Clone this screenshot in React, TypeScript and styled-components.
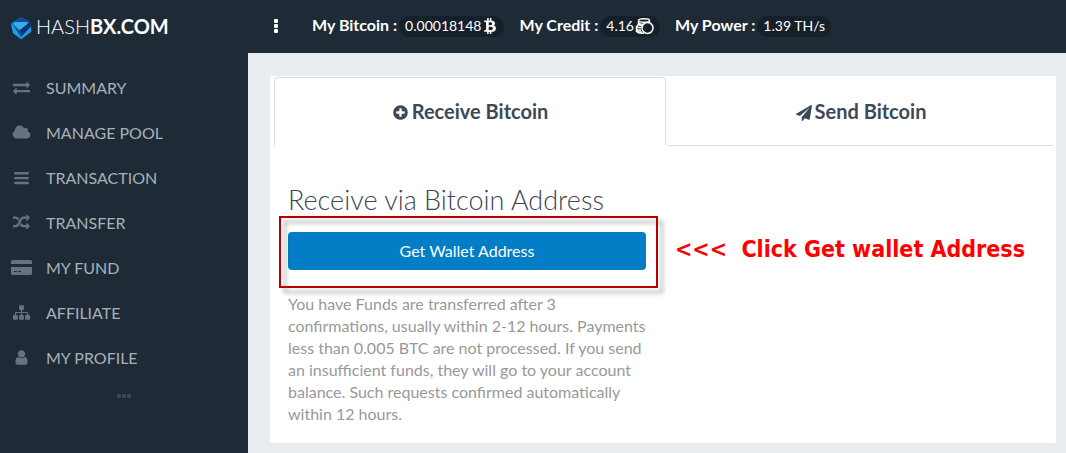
import React from "react";
import styled, { createGlobalStyle, css } from "styled-components";
import { FaBtc } from "react-icons/fa";

const GlobalStyle = createGlobalStyle`
  *, *::before, *::after { box-sizing: border-box; }
  body {
    margin: 0;
    background: #e9edf2;
    color: #3d4751;
    font-family: Lato, "Liberation Sans", sans-serif;
    font-size: 16px;
    line-height: 22px;
  }
  h1, h2, p, ul { margin: 0; padding: 0; }
`;

const Shell = styled.div`
  display: grid;
  grid-template-columns: 248px minmax(0, 1fr);
  min-height: 100vh;
`;

const Sidebar = styled.aside`
  display: flex;
  flex-direction: column;
  background: #1e2b37;
`;

const Brand = styled.a`
  display: flex;
  align-items: center;
  gap: 4px;
  height: 53px;
  padding: 0 10px 2px;
  color: #fff;
  font-size: 20px;
  line-height: 28px;
  font-weight: 300;
  text-decoration: none;

  svg { margin-top: 4px; }
  b { font-weight: 700; }
`;

const Menu = styled.ul`
  list-style: none;
  padding: 12px 0 0;
`;

const MenuLink = styled.a`
  display: flex;
  align-items: center;
  gap: 13px;
  height: 45px;
  padding: 0 10px;
  color: #a8b1ba;
  text-decoration: none;
`;

const MenuIcon = styled.span`
  display: flex;
  justify-content: center;
  width: 23px;
  color: #67727e;
`;

const SidebarDots = styled.div`
  display: flex;
  justify-content: center;
  gap: 1px;
  padding-top: 14px;

  i {
    width: 4px;
    height: 4px;
    border-radius: 1px;
    background: #3a4754;
  }
`;

const Main = styled.main`
  display: flex;
  flex-direction: column;
`;

const TopBar = styled.header`
  display: flex;
  align-items: center;
  height: 53px;
  padding: 0 0 2px 26px;
  background: #1e2b37;
  color: #fff;
`;

const MoreButton = styled.button`
  display: flex;
  flex-direction: column;
  gap: 1px;
  margin-right: 34px;
  padding: 0;
  border: 0;
  background: none;
  cursor: pointer;

  i {
    width: 4px;
    height: 4px;
    border-radius: 1px;
    background: #fff;
  }
`;

const Stats = styled.div`
  display: flex;
  align-items: center;
  gap: 15px;
`;

const Stat = styled.div`
  display: flex;
  align-items: baseline;
  gap: 2px;
  font-weight: 700;
  white-space: nowrap;
`;

const Badge = styled.span`
  display: flex;
  align-items: center;
  gap: 1px;
  height: 21px;
  padding: 0 6px;
  border-radius: 10px;
  background: #15202a;
  font-size: 14px;
  font-weight: 400;
`;

const Page = styled.div`
  padding: 23px 10px 10px 22px;
`;

const Panel = styled.section`
  padding-bottom: 18px;
  border-radius: 2px;
  background: #fff;
`;

const Tabs = styled.div`
  display: flex;
  gap: 2px;
  padding: 1px 2px 0 4px;
`;

const Tab = styled.button<{ $active?: boolean }>`
  display: flex;
  flex: 1;
  align-items: center;
  justify-content: center;
  gap: 3px;
  height: 69px;
  padding: 0 0 2px;
  border: 1px solid transparent;
  border-bottom-color: #ddd;
  background: #fff;
  color: #3d4957;
  font: 700 20px/24px Lato, "Liberation Sans", sans-serif;
  cursor: pointer;

  svg { margin-top: 4px; }

  ${({ $active }) =>
    $active &&
    css`
      flex: 0 0 calc(50% + 2px);
      border-color: #ddd #ddd transparent;
      border-radius: 4px 4px 0 0;
    `}
`;

const Columns = styled.div`
  display: grid;
  grid-template-columns: repeat(2, minmax(0, 1fr));
  gap: 29px;
  padding: 38px 23px 0 18px;
`;

const Title = styled.h1`
  margin-bottom: 16px;
  font-size: 27px;
  line-height: 32px;
  font-weight: 300;
  white-space: nowrap;
`;

const Highlight = styled.div`
  position: relative;
  margin-bottom: 23px;

  &::after {
    content: "";
    position: absolute;
    inset: -16px -12px -18px -9px;
    border: 2px solid #b80000;
    filter: drop-shadow(5px 5px 2px rgba(0, 0, 0, 0.35));
    pointer-events: none;
  }
`;

const PrimaryButton = styled.button`
  display: block;
  width: 100%;
  height: 38px;
  border: 0;
  border-radius: 4px;
  background: #037dc5;
  color: #fff;
  font: 400 16px/22px Lato, "Liberation Sans", sans-serif;
  cursor: pointer;
`;

const Hint = styled.p`
  color: #999;
`;

const Callout = styled.p`
  padding-top: 52px;
  color: #f00;
  font: 700 23px/26px "DejaVu Sans Condensed", "DejaVu Sans", sans-serif;
  white-space: pre;
`;

const paths = {
  exchange:
    "M1792 1184v192q0 13-9.5 22.5t-22.5 9.5h-1376v192q0 13-9.5 22.5t-22.5 9.5q-12 0-24-10l-319-320q-9-9-9-22 0-14 9-23l320-320q9-9 23-9 13 0 22.5 9.5t9.5 22.5v192h1376q13 0 22.5 9.5t9.5 22.5zm0-544q0 14-9 23l-320 320q-9 9-23 9-13 0-22.5-9.5t-9.5-22.5v-192h-1376q-13 0-22.5-9.5t-9.5-22.5v-192q0-13 9.5-22.5t22.5-9.5h1376v-192q0-14 9-23t23-9q12 0 24 10l319 319q9 9 9 23z",
  cloud:
    "M1984 1152q0 159-112.5 271.5t-271.5 112.5h-1088q-185 0-316.5-131.5t-131.5-316.5q0-132 71-241.5t187-163.5q-2-28-2-43 0-212 150-362t362-150q158 0 286.5 88t187.5 230q70-62 166-62 106 0 181 75t75 181q0 75-41 138 129 30 213 134.5t84 239.5z",
  bars:
    "M128 384q0-64 64-64h1408q64 0 64 64v128q0 64-64 64H192q-64 0-64-64zM128 896q0-64 64-64h1408q64 0 64 64v128q0 64-64 64H192q-64 0-64-64zM128 1408q0-64 64-64h1408q64 0 64 64v128q0 64-64 64H192q-64 0-64-64z",
  random:
    "M666 481q-60 92-137 273-22-45-37-72.5t-40.5-63.5-51-56.5-63-35-81.5-14.5h-224q-14 0-23-9t-9-23v-192q0-14 9-23t23-9h224q250 0 410 225zm1126 799q0 14-9 23l-320 320q-9 9-23 9-13 0-22.5-9.5t-9.5-22.5v-192q-32 0-85 .5t-81 1-73-1-71-5-64-10.5-63-18.5-58-28.5-59-40-55-53.5-56-69.5q59-93 136-273 22 45 37 72.5t40.5 63.5 51 56.5 63 35 81.5 14.5h256v-192q0-14 9-23t23-9q12 0 24 10l319 319q9 9 9 23zm0-896q0 14-9 23l-320 320q-9 9-23 9-13 0-22.5-9.5t-9.5-22.5v-192h-256q-48 0-87 15t-69 45-51 61.5-45 77.5q-32 62-78 171-29 66-49.5 111t-54 105-64 100-74 83-90 68.5-106.5 42-128 16.5h-224q-14 0-23-9t-9-23v-192q0-14 9-23t23-9h224q48 0 87-15t69-45 51-61.5 45-77.5q32-62 78-171 29-66 49.5-111t54-105 64-100 74-83 90-68.5 106.5-42 128-16.5h256v-192q0-14 9-23t23-9q12 0 24 10l319 319q9 9 9 23z",
  sitemap:
    "M1792 1248v320q0 40-28 68t-68 28h-320q-40 0-68-28t-28-68v-320q0-40 28-68t68-28h96v-192h-512v192h96q40 0 68 28t28 68v320q0 40-28 68t-68 28h-320q-40 0-68-28t-28-68v-320q0-40 28-68t68-28h96v-192h-512v192h96q40 0 68 28t28 68v320q0 40-28 68t-68 28h-320q-40 0-68-28t-28-68v-320q0-40 28-68t68-28h96v-192q0-52 38-90t90-38h512v-192h-96q-40 0-68-28t-28-68v-320q0-40 28-68t68-28h320q40 0 68 28t28 68v320q0 40-28 68t-68 28h-96v192h512q52 0 90 38t38 90v192h96q40 0 68 28t28 68z",
  user:
    "M1536 1399q0 109-62.5 187t-150.5 78h-854q-88 0-150.5-78t-62.5-187q0-85 8.5-160.5t31.5-152 58.5-131 94-89 134.5-34.5q131 128 313 128t313-128q76 0 134.5 34.5t94 89 58.5 131 31.5 152 8.5 160.5zm-256-887q0 159-112.5 271.5t-271.5 112.5-271.5-112.5-112.5-271.5 112.5-271.5 271.5-112.5 271.5 112.5 112.5 271.5z",
  plus:
    "M1344 960v-128q0-26-19-45t-45-19h-256v-256q0-26-19-45t-45-19h-128q-26 0-45 19t-19 45v256h-256q-26 0-45 19t-19 45v128q0 26 19 45t45 19h256v256q0 26 19 45t45 19h128q26 0 45-19t19-45v-256h256q26 0 45-19t19-45zm320-64q0 209-103 385.5t-279.5 279.5-385.5 103-385.5-103-279.5-279.5-103-385.5 103-385.5 279.5-279.5 385.5-103 385.5 103 279.5 279.5 103 385.5z",
  plane:
    "M1764 11q33 24 27 64l-256 1536q-5 29-32 45-14 8-31 8-11 0-24-5l-453-185-242 295q-18 23-49 23-13 0-22-4-19-7-30.5-23.5t-11.5-36.5v-349l864-1059-1069 925-395-162q-37-14-40-55-2-40 32-59l1664-960q15-9 32-9 20 0 36 11z",
};

type GlyphName = keyof typeof paths;

const Glyph = ({ name, size = 17, box = 1792 }: { name: GlyphName; size?: number; box?: number }) => (
  <svg width={size} height={size} viewBox={`0 0 ${box} 1792`} fill="currentColor" aria-hidden="true">
    <path d={paths[name]} />
  </svg>
);

const CardIcon = () => (
  <svg width="21" height="15" viewBox="0 0 21 15" fill="currentColor" aria-hidden="true">
    <path d="M1.500 0h18A1.500 1.500 0 0 1 21 1.500V4H0V1.500A1.500 1.500 0 0 1 1.500 0zM0 7h21v6.500a1.500 1.500 0 0 1-1.500 1.500h-18A1.500 1.500 0 0 1 0 13.500z" />
    <path d="M3 11.500h3M7 11.500h3" stroke="#1e2b37" />
  </svg>
);

const LogoMark = () => (
  <svg width="22" height="24" viewBox="0 0 22 24" aria-hidden="true">
    <path d="M11 1 20 6 21.500 14 11 23.500 3 17 1 7z" fill="#1467b4" />
    <path d="M11 1 19 6 15 7 5 6z" fill="#164a8c" />
    <path d="M5 6 17 6 18 8 10 14 3 8z" fill="#2fb0ea" />
    <path d="M1 8 10 14 11 23 3 17z" fill="#1da1e4" />
    <path d="M3 9 10 15 10 20z" fill="#14509a" />
    <path d="M20 6 21 10 11 21 10 14z" fill="#13306f" />
    <path d="M21 11 21 16 11 23.500 12 20z" fill="#1f9bdd" />
  </svg>
);

const CoinsIcon = () => (
  <svg width="19" height="17" viewBox="0 0 19 17" fill="none" stroke="#fff" strokeWidth="1.500" aria-hidden="true">
    <ellipse cx="9" cy="2.500" rx="5.500" ry="1.700" />
    <path d="M3.500 3v3.500M14.500 3v2M3.500 5c1.500 1 3 1.400 5 1.400M1.500 8.500c1.500 1.200 3 1.300 4.500 1.100M1.500 8.500l2-2c1 1 2.500 1.300 4 1.200M1.500 11c1.500 1.200 3 1.300 4.500 1.100M1.500 8.500V13.500c2 1.800 4.500 2 7.500 1.500M2 13c1.500 1 3 1.200 5 1" />
    <circle cx="12.500" cy="10" r="5.500" />
  </svg>
);

const menu: { label: string; icon: React.ReactNode }[] = [
  { label: "SUMMARY", icon: <Glyph name="exchange" /> },
  { label: "MANAGE POOL", icon: <Glyph name="cloud" size={19} box={2048} /> },
  { label: "TRANSACTION", icon: <Glyph name="bars" /> },
  { label: "TRANSFER", icon: <Glyph name="random" /> },
  { label: "MY FUND", icon: <CardIcon /> },
  { label: "AFFILIATE", icon: <Glyph name="sitemap" /> },
  { label: "MY PROFILE", icon: <Glyph name="user" /> },
];

export default function App() {
  return (
    <>
      <GlobalStyle />
      <Shell>
        <Sidebar>
          <Brand href="#">
            <LogoMark />
            <span>HASH<b>BX.COM</b></span>
          </Brand>
          <nav>
            <Menu>
              {menu.map(({ label, icon }) => (
                <li key={label}>
                  <MenuLink href="#">
                    <MenuIcon>{icon}</MenuIcon>
                    {label}
                  </MenuLink>
                </li>
              ))}
            </Menu>
          </nav>
          <SidebarDots><i /><i /><i /></SidebarDots>
        </Sidebar>
        <Main>
          <TopBar>
            <MoreButton aria-label="More"><i /><i /><i /></MoreButton>
            <Stats>
              <Stat>My Bitcoin : <Badge>0.00018148 <FaBtc size={16} /></Badge></Stat>
              <Stat>My Credit : <Badge>4.16<CoinsIcon /></Badge></Stat>
              <Stat>My Power : <Badge>1.39 TH/s</Badge></Stat>
            </Stats>
          </TopBar>
          <Page>
            <Panel>
              <Tabs role="tablist">
                <Tab role="tab" aria-selected="true" $active>
                  <Glyph name="plus" />Receive Bitcoin
                </Tab>
                <Tab role="tab" aria-selected="false">
                  <Glyph name="plane" size={16} />Send Bitcoin
                </Tab>
              </Tabs>
              <Columns>
                <div>
                  <Title>Receive via Bitcoin Address</Title>
                  <Highlight>
                    <PrimaryButton>Get Wallet Address</PrimaryButton>
                  </Highlight>
                  <Hint>
                    You have Funds are transferred after 3 confirmations, usually within 2-12 hours.
                    Payments less than 0.005 BTC are not processed. If you send an insufficient funds,
                    they will go to your account balance. Such requests confirmed automatically within
                    12 hours.
                  </Hint>
                </div>
                <Callout>{"<<<  Click Get wallet Address"}</Callout>
              </Columns>
            </Panel>
          </Page>
        </Main>
      </Shell>
    </>
  );
}
